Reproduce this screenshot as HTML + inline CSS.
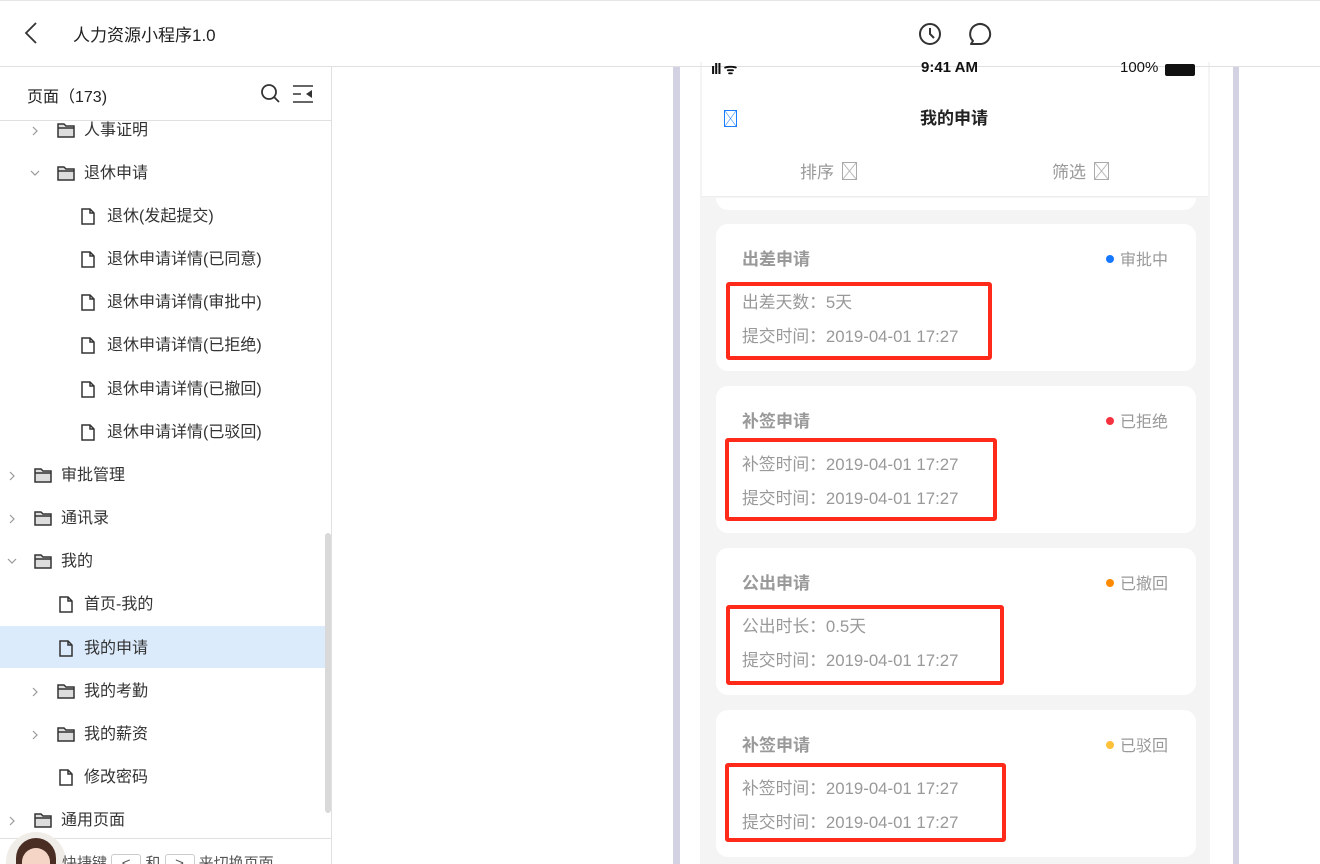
<!DOCTYPE html>
<html style="overflow:hidden"><head><meta charset="utf-8"><style>
*{margin:0;padding:0;box-sizing:border-box}
html,body{width:1320px;height:864px;overflow:hidden}
body{background:#fff;font-family:"Liberation Sans","Noto Sans CJK SC",sans-serif;color:#333;position:relative}
.a{position:absolute}
.top{left:0;top:0;width:1320px;height:67px;border-top:1px solid #e6e6e6;border-bottom:1px solid #e0e0e0}
.side{left:0;top:67px;width:332px;height:797px;border-right:1px solid #e0e0e0}
.row{position:absolute;left:0;width:325px;height:43px;font-size:16px;color:#333;line-height:43px}
.row span{position:absolute}
.card{position:absolute;left:716px;width:480px;height:147px;background:#fff;border-radius:12px}
.ct{position:absolute;left:26px;top:21px;font-size:17px;font-weight:bold;color:#999}
.st{position:absolute;right:28px;top:22px;font-size:16px;color:#999}
.dot{display:inline-block;width:8px;height:8px;border-radius:4px;margin-right:6px;vertical-align:2px}
.l1,.l2{position:absolute;left:26px;font-size:16.8px;color:#999}
.l1{top:65px}.l2{top:99px}
.red{position:absolute;border:4px solid #ff2a1a;border-radius:3px}
</style></head><body>
<div class="a top"></div>
<svg class="a" style="left:20px;top:21px" width="20" height="24"><path d="M16 2 L6 12 L16 22" fill="none" stroke="#333" stroke-width="1.8"/></svg>
<div class="a" style="left:73px;top:21px;font-size:17px;color:#222">人力资源小程序1.0</div>
<svg class="a" style="left:917px;top:21px" width="26" height="26"><circle cx="13" cy="13" r="10" fill="none" stroke="#333" stroke-width="2"/><path d="M13 7v6l4 4" fill="none" stroke="#333" stroke-width="2"/></svg>
<svg class="a" style="left:967px;top:21px" width="28" height="26"><path d="M6 20 L4 23 L13 23 A10 10 0 1 0 6 20Z" fill="none" stroke="#333" stroke-width="2" stroke-linejoin="round"/></svg>

<div class="a side"></div>
<div class="a" style="left:0;top:626px;width:325px;height:42px;background:#dcebfc"></div>

<div class="a" style="left:0;top:121px;width:325px;height:717px;overflow:hidden">
<div style="position:absolute;left:0;top:-119px;width:325px;height:960px">
<div class="row" style="top:107px"><svg class="a" style="left:31px;top:16px" width="8" height="12"><path d="M2 2l4 4-4 4" fill="none" stroke="#999" stroke-width="1.2"/></svg><svg class="a" style="left:57px;top:14px" width="18" height="15"><path d="M1 1h6l2 2h8v11H1z M1 5h16" fill="#ddd" stroke="#333" stroke-width="1.5"/></svg><span style="left:84px">人事证明</span></div>
<div class="row" style="top:150px"><svg class="a" style="left:29px;top:17px" width="12" height="8"><path d="M2 2l4 4 4-4" fill="none" stroke="#999" stroke-width="1.2"/></svg><svg class="a" style="left:57px;top:14px" width="18" height="15"><path d="M1 1h6l2 2h8v11H1z M1 5h16" fill="#ddd" stroke="#333" stroke-width="1.5"/></svg><span style="left:84px">退休申请</span></div>
<div class="row" style="top:193px"><svg class="a" style="left:81px;top:13px" width="14" height="17"><path d="M1 1h8l4 4v11H1z M9 1v4h4" fill="none" stroke="#333" stroke-width="1.5"/></svg><span style="left:107px">退休(发起提交)</span></div>
<div class="row" style="top:236px"><svg class="a" style="left:81px;top:13px" width="14" height="17"><path d="M1 1h8l4 4v11H1z M9 1v4h4" fill="none" stroke="#333" stroke-width="1.5"/></svg><span style="left:107px">退休申请详情(已同意)</span></div>
<div class="row" style="top:279px"><svg class="a" style="left:81px;top:13px" width="14" height="17"><path d="M1 1h8l4 4v11H1z M9 1v4h4" fill="none" stroke="#333" stroke-width="1.5"/></svg><span style="left:107px">退休申请详情(审批中)</span></div>
<div class="row" style="top:322px"><svg class="a" style="left:81px;top:13px" width="14" height="17"><path d="M1 1h8l4 4v11H1z M9 1v4h4" fill="none" stroke="#333" stroke-width="1.5"/></svg><span style="left:107px">退休申请详情(已拒绝)</span></div>
<div class="row" style="top:366px"><svg class="a" style="left:81px;top:13px" width="14" height="17"><path d="M1 1h8l4 4v11H1z M9 1v4h4" fill="none" stroke="#333" stroke-width="1.5"/></svg><span style="left:107px">退休申请详情(已撤回)</span></div>
<div class="row" style="top:409px"><svg class="a" style="left:81px;top:13px" width="14" height="17"><path d="M1 1h8l4 4v11H1z M9 1v4h4" fill="none" stroke="#333" stroke-width="1.5"/></svg><span style="left:107px">退休申请详情(已驳回)</span></div>
<div class="row" style="top:452px"><svg class="a" style="left:8px;top:16px" width="8" height="12"><path d="M2 2l4 4-4 4" fill="none" stroke="#999" stroke-width="1.2"/></svg><svg class="a" style="left:34px;top:14px" width="18" height="15"><path d="M1 1h6l2 2h8v11H1z M1 5h16" fill="#ddd" stroke="#333" stroke-width="1.5"/></svg><span style="left:61px">审批管理</span></div>
<div class="row" style="top:495px"><svg class="a" style="left:8px;top:16px" width="8" height="12"><path d="M2 2l4 4-4 4" fill="none" stroke="#999" stroke-width="1.2"/></svg><svg class="a" style="left:34px;top:14px" width="18" height="15"><path d="M1 1h6l2 2h8v11H1z M1 5h16" fill="#ddd" stroke="#333" stroke-width="1.5"/></svg><span style="left:61px">通讯录</span></div>
<div class="row" style="top:538px"><svg class="a" style="left:6px;top:17px" width="12" height="8"><path d="M2 2l4 4 4-4" fill="none" stroke="#999" stroke-width="1.2"/></svg><svg class="a" style="left:34px;top:14px" width="18" height="15"><path d="M1 1h6l2 2h8v11H1z M1 5h16" fill="#ddd" stroke="#333" stroke-width="1.5"/></svg><span style="left:61px">我的</span></div>
<div class="row" style="top:581px"><svg class="a" style="left:59px;top:13px" width="14" height="17"><path d="M1 1h8l4 4v11H1z M9 1v4h4" fill="none" stroke="#333" stroke-width="1.5"/></svg><span style="left:84px">首页-我的</span></div>
<div class="row" style="top:625px"><svg class="a" style="left:59px;top:13px" width="14" height="17"><path d="M1 1h8l4 4v11H1z M9 1v4h4" fill="none" stroke="#333" stroke-width="1.5"/></svg><span style="left:84px">我的申请</span></div>
<div class="row" style="top:668px"><svg class="a" style="left:31px;top:16px" width="8" height="12"><path d="M2 2l4 4-4 4" fill="none" stroke="#999" stroke-width="1.2"/></svg><svg class="a" style="left:57px;top:14px" width="18" height="15"><path d="M1 1h6l2 2h8v11H1z M1 5h16" fill="#ddd" stroke="#333" stroke-width="1.5"/></svg><span style="left:84px">我的考勤</span></div>
<div class="row" style="top:711px"><svg class="a" style="left:31px;top:16px" width="8" height="12"><path d="M2 2l4 4-4 4" fill="none" stroke="#999" stroke-width="1.2"/></svg><svg class="a" style="left:57px;top:14px" width="18" height="15"><path d="M1 1h6l2 2h8v11H1z M1 5h16" fill="#ddd" stroke="#333" stroke-width="1.5"/></svg><span style="left:84px">我的薪资</span></div>
<div class="row" style="top:754px"><svg class="a" style="left:59px;top:13px" width="14" height="17"><path d="M1 1h8l4 4v11H1z M9 1v4h4" fill="none" stroke="#333" stroke-width="1.5"/></svg><span style="left:84px">修改密码</span></div>
<div class="row" style="top:797px"><svg class="a" style="left:8px;top:16px" width="8" height="12"><path d="M2 2l4 4-4 4" fill="none" stroke="#999" stroke-width="1.2"/></svg><svg class="a" style="left:34px;top:14px" width="18" height="15"><path d="M1 1h6l2 2h8v11H1z M1 5h16" fill="#ddd" stroke="#333" stroke-width="1.5"/></svg><span style="left:61px">通用页面</span></div>
</div></div>

<div class="a" style="left:0;top:120px;width:331px;height:1px;background:#e0e0e0"></div>
<div class="a" style="left:27px;top:83px;font-size:16px;color:#222">页面（173)</div>
<svg class="a" style="left:260px;top:83px" width="22" height="22"><circle cx="9" cy="9" r="7" fill="none" stroke="#333" stroke-width="1.8"/><path d="M14 14l5 5" stroke="#333" stroke-width="1.8"/></svg>
<svg class="a" style="left:292px;top:84px" width="22" height="20"><path d="M1 2h20M1 10h8M1 18h20" stroke="#333" stroke-width="1.6"/><path d="M20 6v8l-6-4z" fill="#333"/></svg>
<div class="a" style="left:325px;top:533px;width:6px;height:280px;background:#d9d9d9;border-radius:3px"></div>
<div class="a" style="left:0;top:838px;width:331px;height:1px;background:#e0e0e0"></div>
<div class="a" style="left:0;top:830px;width:331px;height:34px;overflow:hidden">
<div class="a" style="left:6px;top:2px;width:60px;height:60px;border-radius:30px;background:#f0ece8;overflow:hidden"><div style="position:absolute;left:10px;top:6px;width:40px;height:50px;border-radius:20px;background:#4a2e24"></div><div style="position:absolute;left:16px;top:16px;width:28px;height:40px;border-radius:14px;background:#f5d6c6"></div></div>
<div class="a" style="left:62px;top:22px;font-size:15px;color:#555;white-space:nowrap">快捷键 <span style="display:inline-block;border:1px solid #ccc;border-radius:3px;width:30px;text-align:center">&lt;</span> 和 <span style="display:inline-block;border:1px solid #ccc;border-radius:3px;width:30px;text-align:center">&gt;</span> 来切换页面</div>
</div>

<!-- phone -->
<div class="a" style="left:673px;top:67px;width:7px;height:797px;background:#d2d2e2"></div>
<div class="a" style="left:1233px;top:67px;width:6px;height:797px;background:#d2d2e2"></div>
<div class="a" style="left:700px;top:62px;width:510px;height:802px;background:#f4f4f4"></div>
<div class="a" style="left:702px;top:62px;width:506px;height:135px;background:#fff;border-bottom:1px solid #eee"></div>
<div class="a" style="left:332px;top:66px;width:988px;height:1px;background:#e0e0e0"></div>
<div class="a" style="left:711px;top:59px;font-size:15px;font-weight:bold;color:#111;letter-spacing:-1px">ıll ᯤ</div>
<div class="a" style="left:921px;top:59px;font-size:15px;font-weight:bold;color:#111">9:41 AM</div>
<div class="a" style="left:1120px;top:59px;font-size:15px;color:#111">100%</div>
<div class="a" style="left:1165px;top:64px;width:30px;height:12px;background:#111;border-radius:2px"></div>
<div class="a" style="left:724px;top:110px;width:13px;height:17px;border:1px solid #1a7fff;background:linear-gradient(to top right,transparent 47%,#1a7fff 50%,transparent 53%),linear-gradient(to top left,transparent 47%,#1a7fff 50%,transparent 53%)"></div>
<div class="a" style="left:920px;top:104px;font-size:17px;font-weight:bold;color:#222">我的申请</div>
<div class="a" style="left:800px;top:158px;font-size:17px;color:#999">排序</div>
<div class="a" style="left:842px;top:162px;width:15px;height:18px;border:1px solid #aaa;background:linear-gradient(to top right,transparent 46%,#aaa 50%,transparent 54%),linear-gradient(to top left,transparent 46%,#aaa 50%,transparent 54%)"></div>
<div class="a" style="left:1052px;top:158px;font-size:17px;color:#999">筛选</div>
<div class="a" style="left:1094px;top:162px;width:15px;height:18px;border:1px solid #aaa;background:linear-gradient(to top right,transparent 46%,#aaa 50%,transparent 54%),linear-gradient(to top left,transparent 46%,#aaa 50%,transparent 54%)"></div>
<div class="a" style="left:716px;top:198px;width:480px;height:12px;background:#fff;border-radius:0 0 12px 12px"></div>

<div class="card" style="top:224px"><div class="ct">出差申请</div><div class="st"><span class="dot" style="background:#1677ff"></span>审批中</div><div class="l1">出差天数：5天</div><div class="l2">提交时间：2019-04-01 17:27</div></div>
<div class="card" style="top:386px"><div class="ct">补签申请</div><div class="st"><span class="dot" style="background:#f5333f"></span>已拒绝</div><div class="l1">补签时间：2019-04-01 17:27</div><div class="l2">提交时间：2019-04-01 17:27</div></div>
<div class="card" style="top:548px"><div class="ct">公出申请</div><div class="st"><span class="dot" style="background:#ff8a00"></span>已撤回</div><div class="l1">公出时长：0.5天</div><div class="l2">提交时间：2019-04-01 17:27</div></div>
<div class="card" style="top:710px"><div class="ct">补签申请</div><div class="st"><span class="dot" style="background:#ffc03a"></span>已驳回</div><div class="l1">补签时间：2019-04-01 17:27</div><div class="l2">提交时间：2019-04-01 17:27</div></div>

<div class="red" style="left:726px;top:282px;width:266px;height:78px"></div>
<div class="red" style="left:725px;top:438px;width:272px;height:83px"></div>
<div class="red" style="left:726px;top:605px;width:278px;height:80px"></div>
<div class="red" style="left:725px;top:763px;width:281px;height:79px"></div>
</body></html>
